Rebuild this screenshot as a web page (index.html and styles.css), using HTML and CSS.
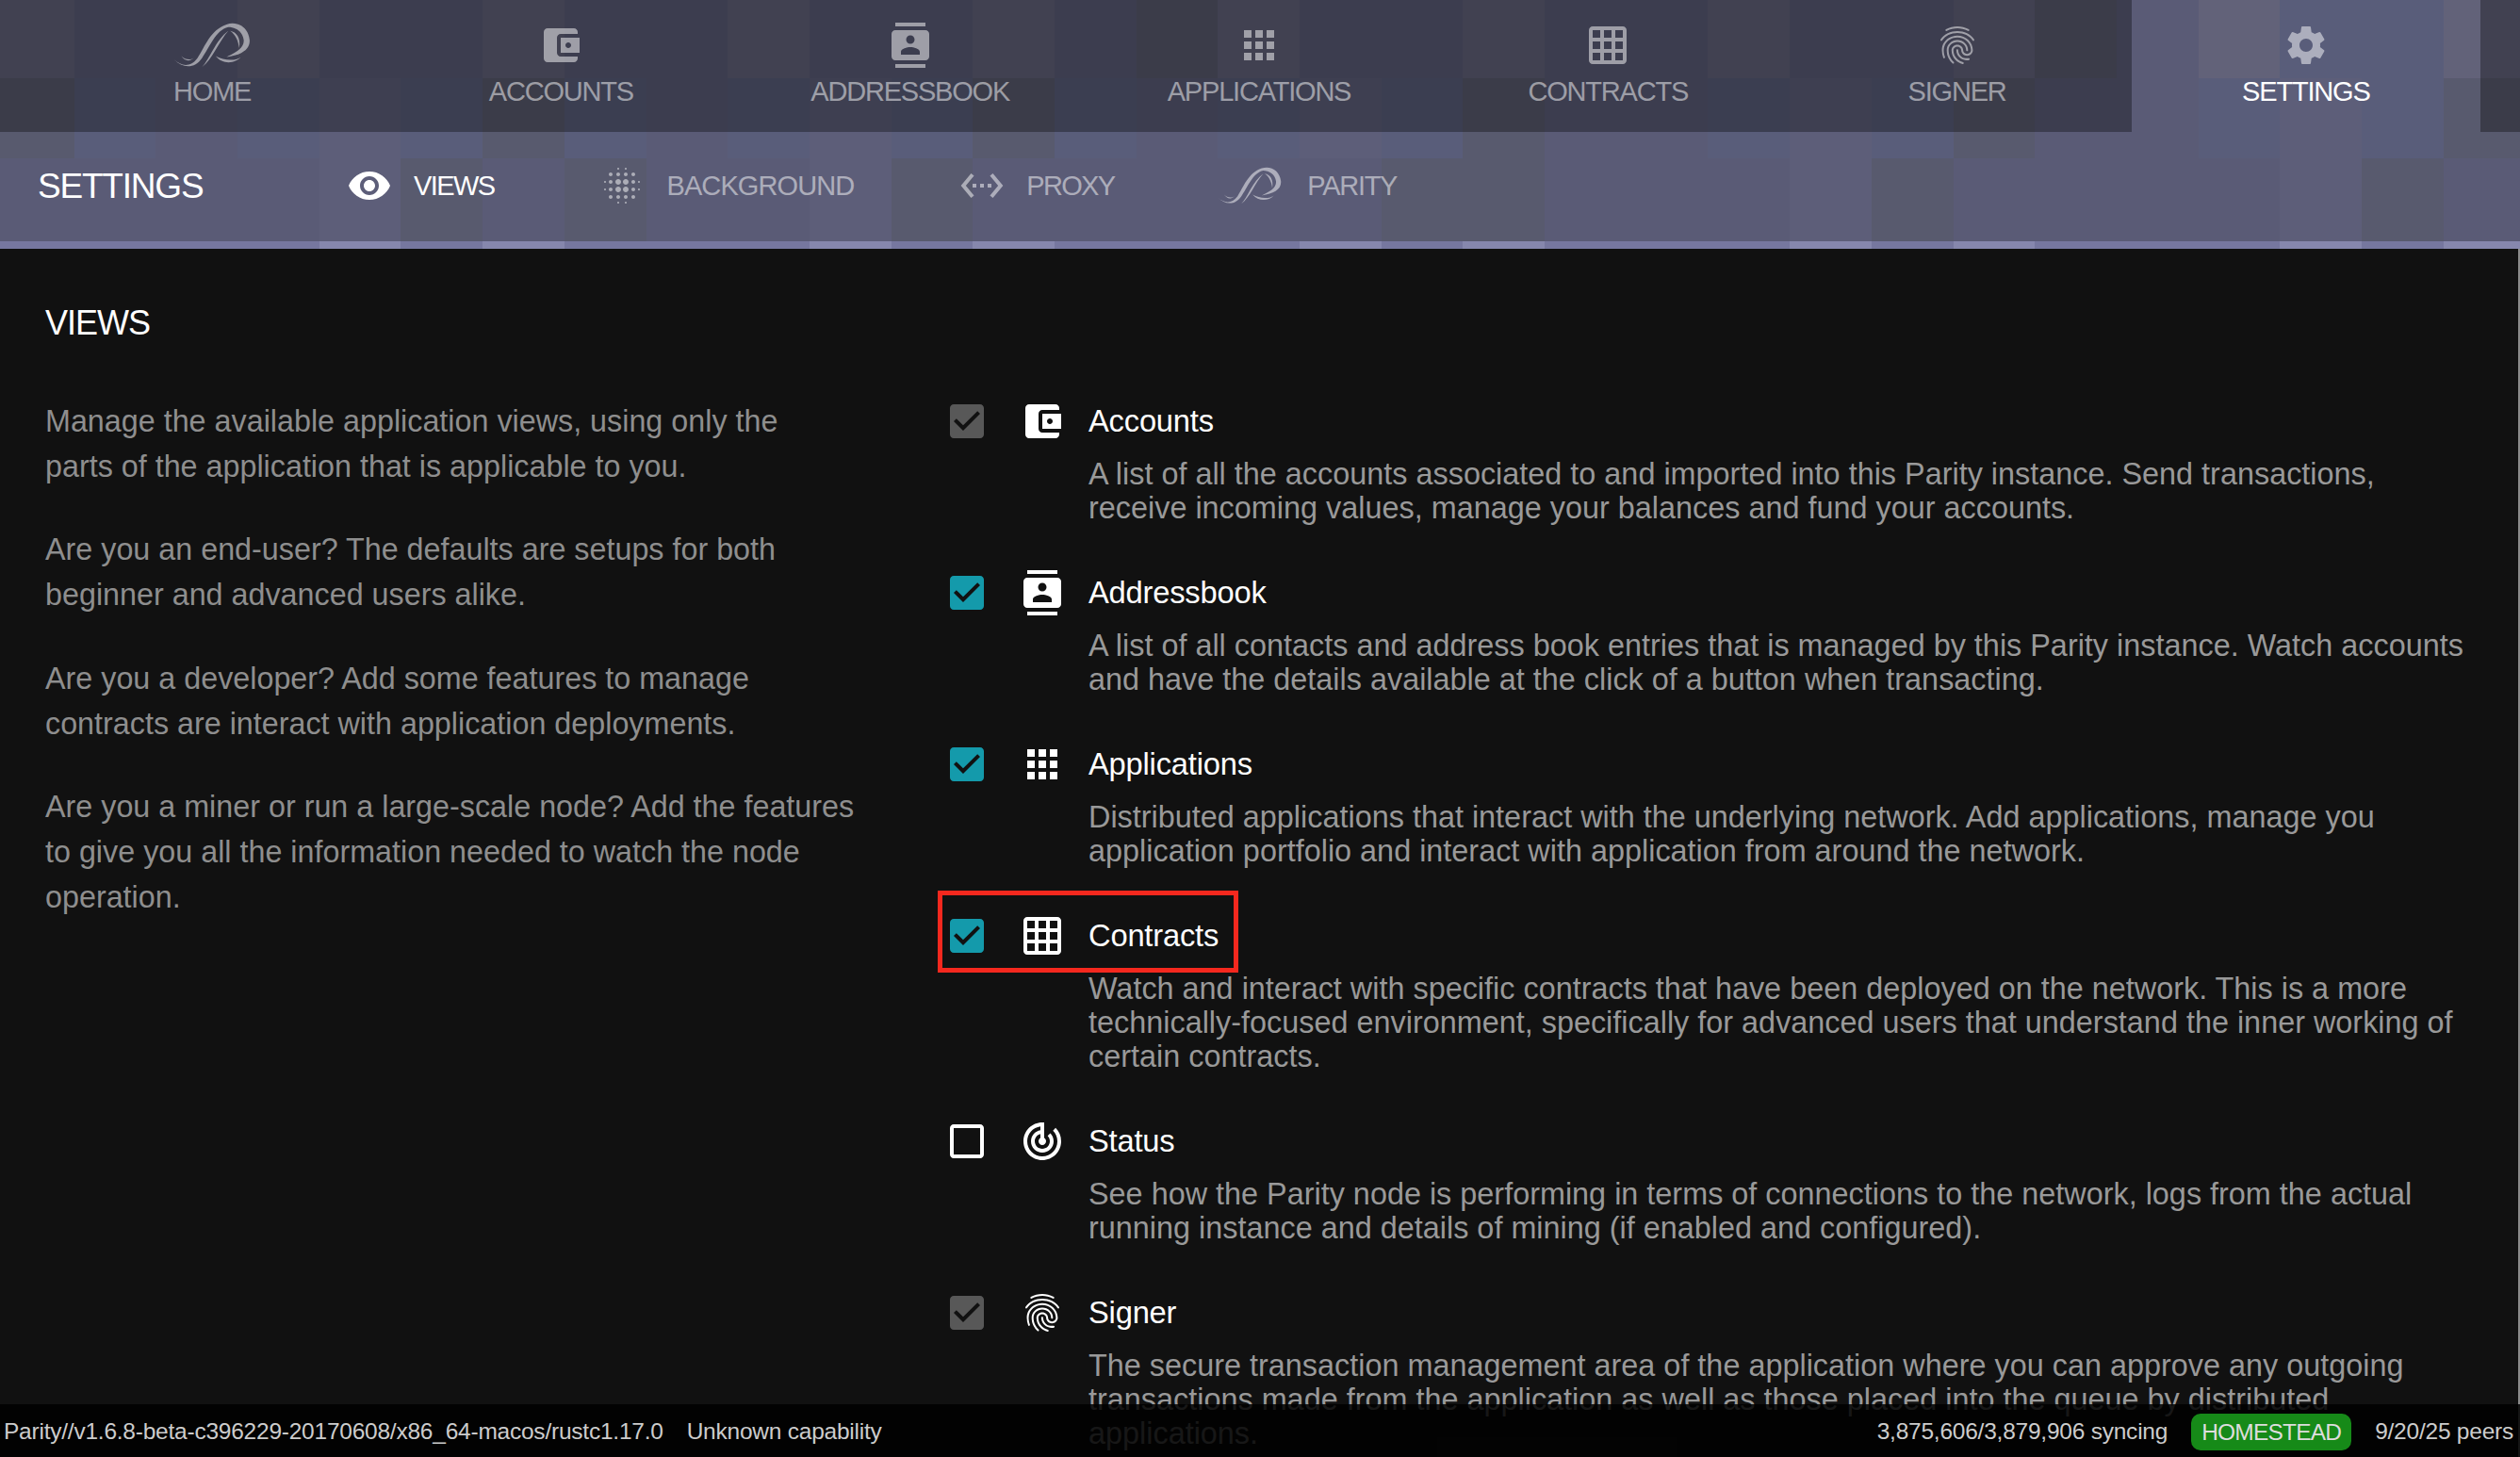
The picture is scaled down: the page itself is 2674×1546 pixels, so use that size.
FILE: index.html
```html
<!DOCTYPE html>
<html lang="en">
<head>
  <meta charset="UTF-8" />
  <title>Parity Settings</title>
  <link rel="stylesheet" href="styles.css">
</head>
<body>
  <header class="chrome">
    <div class="mosaic" id="mosaic"></div>

    <nav class="tabs">
      <div class="tabs-edge tabs-edge-left"></div>
      <a class="tab">
        <svg class="parity-logo" viewBox="0 0 84 50"><path d="M0 41C8 48 18 50 26 39C34 27 40 8 58 2C70 -2 82 5 83.5 19C84.5 30 74 36 58 38C68 33 78 28 77 19C76 10 68 5 60 5C46 8 39 28 31 39C23 51 10 51 0 41Z"/><path d="M31 49C39 41 46 19 60 9C50 20 42 41 31 49Z"/><path d="M62 9C69 10 74 17 72 28C71 20 68 13 62 9Z"/><path d="M46 37C56 43 70 42 74 38C68 45 54 47 46 37Z"/><path d="M8 37C12 41 18 42 22 39C16 44 12 42 8 37Z"/></svg>
        <span>HOME</span>
      </a>
      <a class="tab">
        <svg class="icon" viewBox="0 0 24 24"><path d="M21 18v1c0 1.1-.9 2-2 2H5c-1.11 0-2-.9-2-2V5c0-1.1.89-2 2-2h14c1.1 0 2 .9 2 2v1h-9c-1.11 0-2 .9-2 2v8c0 1.1.89 2 2 2h9zm-9-2h10V8H12v8zm4-2.5c-.83 0-1.5-.67-1.5-1.5s.67-1.5 1.5-1.5 1.5.67 1.5 1.5-.67 1.5-1.5 1.5z"/></svg>
        <span>ACCOUNTS</span>
      </a>
      <a class="tab">
        <svg class="icon" viewBox="0 0 24 24"><path d="M20 0H4v2h16V0zM4 24h16v-2H4v2zM20 4H4c-1.1 0-2 .9-2 2v12c0 1.1.9 2 2 2h16c1.1 0 2-.9 2-2V6c0-1.1-.9-2-2-2zm-8 2.75c1.24 0 2.25 1.01 2.25 2.25s-1.01 2.25-2.25 2.25S9.75 10.24 9.75 9 10.76 6.75 12 6.75zM17 17H7v-1.5c0-1.67 3.33-2.5 5-2.5s5 .83 5 2.5V17z"/></svg>
        <span>ADDRESSBOOK</span>
      </a>
      <a class="tab">
        <svg class="icon" viewBox="0 0 24 24"><path d="M4 8h4V4H4v4zm6 12h4v-4h-4v4zm-6 0h4v-4H4v4zm0-6h4v-4H4v4zm6 0h4v-4h-4v4zm6-10v4h4V4h-4zm-6 4h4V4h-4v4zm6 6h4v-4h-4v4zm0 6h4v-4h-4v4z"/></svg>
        <span>APPLICATIONS</span>
      </a>
      <a class="tab">
        <svg class="icon" viewBox="0 0 24 24"><path d="M20 2H4c-1.1 0-2 .9-2 2v16c0 1.1.9 2 2 2h16c1.1 0 2-.9 2-2V4c0-1.1-.9-2-2-2zM8 20H4v-4h4v4zm0-6H4v-4h4v4zm0-6H4V4h4v4zm6 12h-4v-4h4v4zm0-6h-4v-4h4v4zm0-6h-4V4h4v4zm6 12h-4v-4h4v4zm0-6h-4v-4h4v4zm0-6h-4V4h4v4z"/></svg>
        <span>CONTRACTS</span>
      </a>
      <a class="tab">
        <svg class="icon" viewBox="0 0 24 24"><path d="M17.81 4.47c-.08 0-.16-.02-.23-.06C15.66 3.42 14 3 12.01 3c-1.98 0-3.86.47-5.57 1.41-.24.13-.54.04-.68-.2-.13-.24-.04-.55.2-.68C7.82 2.52 9.86 2 12.01 2c2.13 0 3.99.47 6.03 1.52.25.13.34.43.21.67-.09.18-.26.28-.44.28zM3.5 9.72c-.1 0-.2-.03-.29-.09-.23-.16-.28-.47-.12-.7.99-1.4 2.25-2.5 3.75-3.27C9.98 4.04 14 4.03 17.15 5.65c1.5.77 2.76 1.86 3.75 3.25.16.22.11.54-.12.7-.23.16-.54.11-.7-.12-.9-1.26-2.04-2.25-3.39-2.94-2.87-1.47-6.54-1.47-9.4.01-1.36.7-2.5 1.7-3.4 2.96-.08.14-.23.21-.39.21zm6.25 12.07c-.13 0-.26-.05-.35-.15-.87-.87-1.34-1.43-2.01-2.64-.69-1.23-1.05-2.73-1.05-4.34 0-2.97 2.54-5.39 5.66-5.39s5.66 2.42 5.66 5.39c0 .28-.22.5-.5.5s-.5-.22-.5-.5c0-2.42-2.09-4.39-4.66-4.39-2.57 0-4.66 1.97-4.66 4.39 0 1.44.32 2.77.93 3.85.64 1.15 1.08 1.64 1.85 2.42.19.2.19.51 0 .71-.11.1-.24.15-.37.15zm7.17-1.85c-1.19 0-2.24-.3-3.1-.89-1.49-1.01-2.38-2.65-2.38-4.39 0-.28.22-.5.5-.5s.5.22.5.5c0 1.41.72 2.74 1.94 3.56.71.48 1.54.71 2.54.71.24 0 .64-.03 1.04-.1.27-.05.53.13.58.41.05.27-.13.53-.41.58-.57.11-1.07.12-1.21.12zM14.91 22c-.04 0-.09-.01-.13-.02-1.59-.44-2.63-1.03-3.72-2.1-1.4-1.39-2.17-3.24-2.17-5.22 0-1.62 1.38-2.94 3.08-2.94 1.7 0 3.08 1.32 3.08 2.94 0 1.07.93 1.94 2.08 1.94s2.08-.87 2.08-1.94c0-3.77-3.25-6.83-7.25-6.83-2.84 0-5.44 1.58-6.61 4.03-.39.81-.59 1.76-.59 2.8 0 .78.07 2.01.67 3.61.1.26-.03.55-.29.64-.26.1-.55-.04-.64-.29-.49-1.31-.73-2.61-.73-3.96 0-1.2.23-2.29.68-3.24 1.33-2.79 4.28-4.6 7.51-4.6 4.55 0 8.25 3.51 8.25 7.83 0 1.62-1.38 2.94-3.08 2.94s-3.08-1.32-3.08-2.94c0-1.07-.93-1.94-2.08-1.94s-2.08.87-2.08 1.94c0 1.71.66 3.31 1.87 4.51.95.94 1.86 1.46 3.27 1.85.27.07.42.35.35.61-.05.23-.26.38-.47.38z"/></svg>
        <span>SIGNER</span>
      </a>
      <a class="tab tab-active">
        <svg class="icon" viewBox="0 0 24 24"><path d="M19.43 12.98c.04-.32.07-.64.07-.98s-.03-.66-.07-.98l2.11-1.65c.19-.15.24-.42.12-.64l-2-3.46c-.12-.22-.39-.3-.61-.22l-2.49 1c-.52-.4-1.08-.73-1.69-.98l-.38-2.65C14.46 2.18 14.25 2 14 2h-4c-.25 0-.46.18-.49.42l-.38 2.65c-.61.25-1.17.59-1.69.98l-2.49-1c-.23-.09-.49 0-.61.22l-2 3.46c-.13.22-.07.49.12.64l2.11 1.65c-.04.32-.07.65-.07.98s.03.66.07.98l-2.11 1.65c-.19.15-.24.42-.12.64l2 3.46c.12.22.39.3.61.22l2.49-1c.52.4 1.08.73 1.69.98l.38 2.65c.03.24.24.42.49.42h4c.25 0 .46-.18.49-.42l.38-2.65c.61-.25 1.17-.59 1.69-.98l2.49 1c.23.09.49 0 .61-.22l2-3.46c.12-.22.07-.49-.12-.64l-2.11-1.65zM12 15.5c-1.93 0-3.5-1.57-3.5-3.5s1.57-3.5 3.5-3.5 3.5 1.57 3.5 3.5-1.57 3.5-3.5 3.5z"/></svg>
        <span>SETTINGS</span>
      </a>
      <div class="tabs-edge tabs-edge-right"></div>
    </nav>

    <div class="subbar">
      <div class="subbar-title">SETTINGS</div>
      <a class="subtab subtab-active">
        <svg class="icon" viewBox="0 0 24 24"><path d="M12 4.5C7 4.5 2.73 7.61 1 12c1.73 4.39 6 7.5 11 7.5s9.27-3.11 11-7.5c-1.73-4.39-6-7.5-11-7.5zM12 17c-2.76 0-5-2.24-5-5s2.24-5 5-5 5 2.24 5 5-2.24 5-5 5zm0-8c-1.66 0-3 1.34-3 3s1.34 3 3 3 3-1.34 3-3-1.34-3-3-3z"/></svg>
        <span>VIEWS</span>
      </a>
      <a class="subtab">
        <svg class="icon" viewBox="0 0 24 24"><path d="M6 13c-.55 0-1 .45-1 1s.45 1 1 1 1-.45 1-1-.45-1-1-1zm0 4c-.55 0-1 .45-1 1s.45 1 1 1 1-.45 1-1-.45-1-1-1zm0-8c-.55 0-1 .45-1 1s.45 1 1 1 1-.45 1-1-.45-1-1-1zm-3 .5c-.28 0-.5.22-.5.5s.22.5.5.5.5-.22.5-.5-.22-.5-.5-.5zM6 5c-.55 0-1 .45-1 1s.45 1 1 1 1-.45 1-1-.45-1-1-1zm15 5.5c.28 0 .5-.22.5-.5s-.22-.5-.5-.5-.5.22-.5.5.22.5.5.5zM14 7c.55 0 1-.45 1-1s-.45-1-1-1-1 .45-1 1 .45 1 1 1zm0-3.5c.28 0 .5-.22.5-.5s-.22-.5-.5-.5-.5.22-.5.5.22.5.5.5zm-11 10c-.28 0-.5.22-.5.5s.22.5.5.5.5-.22.5-.5-.22-.5-.5-.5zm7 7c-.28 0-.5.22-.5.5s.22.5.5.5.5-.22.5-.5-.22-.5-.5-.5zm0-17c.28 0 .5-.22.5-.5s-.22-.5-.5-.5-.5.22-.5.5.22.5.5.5zM10 7c.55 0 1-.45 1-1s-.45-1-1-1-1 .45-1 1 .45 1 1 1zm0 5.5c-.83 0-1.5.67-1.5 1.5s.67 1.5 1.5 1.5 1.5-.67 1.5-1.5-.67-1.5-1.5-1.5zm8 .5c-.55 0-1 .45-1 1s.45 1 1 1 1-.45 1-1-.45-1-1-1zm0 4c-.55 0-1 .45-1 1s.45 1 1 1 1-.45 1-1-.45-1-1-1zm0-8c-.55 0-1 .45-1 1s.45 1 1 1 1-.45 1-1-.45-1-1-1zm0-4c-.55 0-1 .45-1 1s.45 1 1 1 1-.45 1-1-.45-1-1-1zm3 8.5c-.28 0-.5.22-.5.5s.22.5.5.5.5-.22.5-.5-.22-.5-.5-.5zM14 17c-.55 0-1 .45-1 1s.45 1 1 1 1-.45 1-1-.45-1-1-1zm0 3.5c-.28 0-.5.22-.5.5s.22.5.5.5.5-.22.5-.5-.22-.5-.5-.5zm-4-12c-.83 0-1.5.67-1.5 1.5s.67 1.5 1.5 1.5 1.5-.67 1.5-1.5-.67-1.5-1.5-1.5zm0 8.5c-.55 0-1 .45-1 1s.45 1 1 1 1-.45 1-1-.45-1-1-1zm4-4.5c-.83 0-1.5.67-1.5 1.5s.67 1.5 1.5 1.5 1.5-.67 1.5-1.5-.67-1.5-1.5-1.5zm0-4c-.83 0-1.5.67-1.5 1.5s.67 1.5 1.5 1.5 1.5-.67 1.5-1.5-.67-1.5-1.5-1.5z"/></svg>
        <span>BACKGROUND</span>
      </a>
      <a class="subtab subtab-proxy">
        <svg class="icon" viewBox="0 0 24 24"><path d="M7.77 6.76L6.23 5.48.82 12l5.41 6.52 1.54-1.28L3.42 12l4.35-5.24zM7 13h2v-2H7v2zm10-2h-2v2h2v-2zm-6 2h2v-2h-2v2zm6.77-7.52l-1.54 1.28L20.58 12l-4.35 5.24 1.54 1.28L23.18 12l-5.41-6.52z"/></svg>
        <span>PROXY</span>
      </a>
      <a class="subtab subtab-parity">
        <svg class="parity-logo parity-logo-small" viewBox="0 0 84 50"><path d="M0 41C8 48 18 50 26 39C34 27 40 8 58 2C70 -2 82 5 83.5 19C84.5 30 74 36 58 38C68 33 78 28 77 19C76 10 68 5 60 5C46 8 39 28 31 39C23 51 10 51 0 41Z"/><path d="M31 49C39 41 46 19 60 9C50 20 42 41 31 49Z"/><path d="M62 9C69 10 74 17 72 28C71 20 68 13 62 9Z"/><path d="M46 37C56 43 70 42 74 38C68 45 54 47 46 37Z"/><path d="M8 37C12 41 18 42 22 39C16 44 12 42 8 37Z"/></svg>
        <span>PARITY</span>
      </a>
    </div>
  </header>

  <main class="panel">
    <h2 class="panel-title">VIEWS</h2>
    <div class="columns">
      <section class="intro">
        <p>Manage the available application views, using only the<br>parts of the application that is applicable to you.</p>
        <p>Are you an end-user? The defaults are setups for both beginner and advanced users alike.</p>
        <p>Are you a developer? Add some features to manage contracts are interact with application deployments.</p>
        <p>Are you a miner or run a large-scale node? Add the features to give you all the information needed to watch the node operation.</p>
      </section>

      <section class="views">
        <div class="view">
          <div class="view-head">
            <svg class="check check-disabled" viewBox="0 0 24 24"><path d="M19 3H5c-1.11 0-2 .9-2 2v14c0 1.1.89 2 2 2h14c1.11 0 2-.89 2-2V5c0-1.11-.89-2-2-2zm-9 14l-5-5 1.41-1.41L10 14.17l7.59-7.59L19 8l-9 9z"/></svg>
            <svg class="icon" viewBox="0 0 24 24"><path d="M21 18v1c0 1.1-.9 2-2 2H5c-1.11 0-2-.9-2-2V5c0-1.1.89-2 2-2h14c1.1 0 2 .9 2 2v1h-9c-1.11 0-2 .9-2 2v8c0 1.1.89 2 2 2h9zm-9-2h10V8H12v8zm4-2.5c-.83 0-1.5-.67-1.5-1.5s.67-1.5 1.5-1.5 1.5.67 1.5 1.5-.67 1.5-1.5 1.5z"/></svg>
            <span class="view-name">Accounts</span>
          </div>
          <p class="view-desc">A list of all the accounts associated to and imported into this Parity instance. Send transactions, receive incoming values, manage your balances and fund your accounts.</p>
        </div>

        <div class="view">
          <div class="view-head">
            <svg class="check check-on" viewBox="0 0 24 24"><path d="M19 3H5c-1.11 0-2 .9-2 2v14c0 1.1.89 2 2 2h14c1.11 0 2-.89 2-2V5c0-1.11-.89-2-2-2zm-9 14l-5-5 1.41-1.41L10 14.17l7.59-7.59L19 8l-9 9z"/></svg>
            <svg class="icon" viewBox="0 0 24 24"><path d="M20 0H4v2h16V0zM4 24h16v-2H4v2zM20 4H4c-1.1 0-2 .9-2 2v12c0 1.1.9 2 2 2h16c1.1 0 2-.9 2-2V6c0-1.1-.9-2-2-2zm-8 2.75c1.24 0 2.25 1.01 2.25 2.25s-1.01 2.25-2.25 2.25S9.75 10.24 9.75 9 10.76 6.75 12 6.75zM17 17H7v-1.5c0-1.67 3.33-2.5 5-2.5s5 .83 5 2.5V17z"/></svg>
            <span class="view-name">Addressbook</span>
          </div>
          <p class="view-desc">A list of all contacts and address book entries that is managed by this Parity instance. Watch accounts and have the details available at the click of a button when transacting.</p>
        </div>

        <div class="view">
          <div class="view-head">
            <svg class="check check-on" viewBox="0 0 24 24"><path d="M19 3H5c-1.11 0-2 .9-2 2v14c0 1.1.89 2 2 2h14c1.11 0 2-.89 2-2V5c0-1.11-.89-2-2-2zm-9 14l-5-5 1.41-1.41L10 14.17l7.59-7.59L19 8l-9 9z"/></svg>
            <svg class="icon" viewBox="0 0 24 24"><path d="M4 8h4V4H4v4zm6 12h4v-4h-4v4zm-6 0h4v-4H4v4zm0-6h4v-4H4v4zm6 0h4v-4h-4v4zm6-10v4h4V4h-4zm-6 4h4V4h-4v4zm6 6h4v-4h-4v4zm0 6h4v-4h-4v4z"/></svg>
            <span class="view-name">Applications</span>
          </div>
          <p class="view-desc">Distributed applications that interact with the underlying network. Add applications, manage you application portfolio and interact with application from around the network.</p>
        </div>

        <div class="view">
          <div class="view-head">
            <div class="callout"></div>
            <svg class="check check-on" viewBox="0 0 24 24"><path d="M19 3H5c-1.11 0-2 .9-2 2v14c0 1.1.89 2 2 2h14c1.11 0 2-.89 2-2V5c0-1.11-.89-2-2-2zm-9 14l-5-5 1.41-1.41L10 14.17l7.59-7.59L19 8l-9 9z"/></svg>
            <svg class="icon" viewBox="0 0 24 24"><path d="M20 2H4c-1.1 0-2 .9-2 2v16c0 1.1.9 2 2 2h16c1.1 0 2-.9 2-2V4c0-1.1-.9-2-2-2zM8 20H4v-4h4v4zm0-6H4v-4h4v4zm0-6H4V4h4v4zm6 12h-4v-4h4v4zm0-6h-4v-4h4v4zm0-6h-4V4h4v4zm6 12h-4v-4h4v4zm0-6h-4v-4h4v4zm0-6h-4V4h4v4z"/></svg>
            <span class="view-name">Contracts</span>
          </div>
          <p class="view-desc">Watch and interact with specific contracts that have been deployed on the network. This is a more technically-focused environment, specifically for advanced users that understand the inner working of certain contracts.</p>
        </div>

        <div class="view">
          <div class="view-head">
            <svg class="check check-off" viewBox="0 0 24 24"><path d="M19 5v14H5V5h14m0-2H5c-1.1 0-2 .9-2 2v14c0 1.1.9 2 2 2h14c1.1 0 2-.9 2-2V5c0-1.1-.9-2-2-2z"/></svg>
            <svg class="icon" viewBox="0 0 24 24"><path d="M19.07 4.93l-1.41 1.41C19.1 7.79 20 9.79 20 12c0 4.42-3.58 8-8 8s-8-3.58-8-8c0-4.08 3.05-7.44 7-7.93v2.02C8.16 6.57 6 9.03 6 12c0 3.31 2.69 6 6 6s6-2.69 6-6c0-1.66-.67-3.16-1.76-4.24l-1.41 1.41C15.55 9.9 16 10.9 16 12c0 2.21-1.79 4-4 4s-4-1.79-4-4c0-1.86 1.28-3.41 3-3.86v2.14c-.6.35-1 .98-1 1.72 0 1.1.9 2 2 2s2-.9 2-2c0-.74-.4-1.38-1-1.72V2h-1C6.48 2 2 6.48 2 12s4.48 10 10 10 10-4.48 10-10c0-2.76-1.12-5.26-2.93-7.07z"/></svg>
            <span class="view-name">Status</span>
          </div>
          <p class="view-desc">See how the Parity node is performing in terms of connections to the network, logs from the actual running instance and details of mining (if enabled and configured).</p>
        </div>

        <div class="view">
          <div class="view-head">
            <svg class="check check-disabled" viewBox="0 0 24 24"><path d="M19 3H5c-1.11 0-2 .9-2 2v14c0 1.1.89 2 2 2h14c1.11 0 2-.89 2-2V5c0-1.11-.89-2-2-2zm-9 14l-5-5 1.41-1.41L10 14.17l7.59-7.59L19 8l-9 9z"/></svg>
            <svg class="icon" viewBox="0 0 24 24"><path d="M17.81 4.47c-.08 0-.16-.02-.23-.06C15.66 3.42 14 3 12.01 3c-1.98 0-3.86.47-5.57 1.41-.24.13-.54.04-.68-.2-.13-.24-.04-.55.2-.68C7.82 2.52 9.86 2 12.01 2c2.13 0 3.99.47 6.03 1.52.25.13.34.43.21.67-.09.18-.26.28-.44.28zM3.5 9.72c-.1 0-.2-.03-.29-.09-.23-.16-.28-.47-.12-.7.99-1.4 2.25-2.5 3.75-3.27C9.98 4.04 14 4.03 17.15 5.65c1.5.77 2.76 1.86 3.75 3.25.16.22.11.54-.12.7-.23.16-.54.11-.7-.12-.9-1.26-2.04-2.25-3.39-2.94-2.87-1.47-6.54-1.47-9.4.01-1.36.7-2.5 1.7-3.4 2.96-.08.14-.23.21-.39.21zm6.25 12.07c-.13 0-.26-.05-.35-.15-.87-.87-1.34-1.43-2.01-2.64-.69-1.23-1.05-2.73-1.05-4.34 0-2.97 2.54-5.39 5.66-5.39s5.66 2.42 5.66 5.39c0 .28-.22.5-.5.5s-.5-.22-.5-.5c0-2.42-2.09-4.39-4.66-4.39-2.57 0-4.66 1.97-4.66 4.39 0 1.44.32 2.77.93 3.85.64 1.15 1.08 1.64 1.85 2.42.19.2.19.51 0 .71-.11.1-.24.15-.37.15zm7.17-1.85c-1.19 0-2.24-.3-3.1-.89-1.49-1.01-2.38-2.65-2.38-4.39 0-.28.22-.5.5-.5s.5.22.5.5c0 1.41.72 2.74 1.94 3.56.71.48 1.54.71 2.54.71.24 0 .64-.03 1.04-.1.27-.05.53.13.58.41.05.27-.13.53-.41.58-.57.11-1.07.12-1.21.12zM14.91 22c-.04 0-.09-.01-.13-.02-1.59-.44-2.63-1.03-3.72-2.1-1.4-1.39-2.17-3.24-2.17-5.22 0-1.62 1.38-2.94 3.08-2.94 1.7 0 3.08 1.32 3.08 2.94 0 1.07.93 1.94 2.08 1.94s2.08-.87 2.08-1.94c0-3.77-3.25-6.83-7.25-6.83-2.84 0-5.44 1.58-6.61 4.03-.39.81-.59 1.76-.59 2.8 0 .78.07 2.01.67 3.61.1.26-.03.55-.29.64-.26.1-.55-.04-.64-.29-.49-1.31-.73-2.61-.73-3.96 0-1.2.23-2.29.68-3.24 1.33-2.79 4.28-4.6 7.51-4.6 4.55 0 8.25 3.51 8.25 7.83 0 1.62-1.38 2.94-3.08 2.94s-3.08-1.32-3.08-2.94c0-1.07-.93-1.94-2.08-1.94s-2.08.87-2.08 1.94c0 1.71.66 3.31 1.87 4.51.95.94 1.86 1.46 3.27 1.85.27.07.42.35.35.61-.05.23-.26.38-.47.38z"/></svg>
            <span class="view-name">Signer</span>
          </div>
          <p class="view-desc">The secure transaction management area of the application where you can approve any outgoing transactions made from the application as well as those placed into the queue by distributed applications.</p>
        </div>
      </section>
    </div>
  </main>

  <footer class="status">
    <div class="status-left">
      <span>Parity//v1.6.8-beta-c396229-20170608/x86_64-macos/rustc1.17.0</span>
      <span>Unknown capability</span>
    </div>
    <div class="status-right">
      <span>3,875,606/3,879,906 syncing</span>
      <span class="chain">HOMESTEAD</span>
      <span>9/20/25 peers</span>
    </div>
  </footer>

  <script src="script.js"></script>
</body>
</html>
```

FILE: styles.css
```css
* {
  box-sizing: border-box;
}
html, body {
  height: 100%;
}
body {
  margin: 0;
  height: 1546px;
  overflow: hidden;
  position: relative;
  font-family: "Liberation Sans", Arial, sans-serif;
  background-color: #8a8a8a;
  display: flex;
  flex-direction: column;
}

/* top chrome, sits on the pixel mosaic */
.chrome {
  position: relative;
  height: 264px;
  flex: none;
  overflow: hidden;
}
.mosaic {
  position: absolute;
  top: 0;
  left: -8px;
  display: grid;
  grid-template-columns: repeat(31, 86.7px);
  grid-template-rows: 83px 85px 88px 8px;
}
.tabs {
  position: relative;
  display: flex;
  height: 140px;
}
.tabs-edge {
  background: rgba(0, 0, 0, 0.33);
}
.tabs-edge-left {
  width: 40px;
}
.tabs-edge-right {
  width: 42px;
}
.tab {
  flex: 1;
  display: flex;
  flex-direction: column;
  align-items: center;
  padding-top: 24px;
  background: rgba(0, 0, 0, 0.33);
  color: rgba(255, 255, 255, 0.5);
  font-size: 29px;
  letter-spacing: -1.2px;
  line-height: 36px;
}
.tab .icon, .tab .parity-logo {
  width: 48px;
  height: 48px;
  margin-bottom: 7px;
}
.tab .parity-logo {
  width: 84px;
}
.tab-active {
  background: transparent;
}
.tab-active span {
  color: #fff;
}
.icon, .parity-logo {
  fill: currentColor;
  display: block;
  flex: none;
}
.subbar {
  position: relative;
  height: 116px;
  display: flex;
  align-items: center;
  padding-left: 40px;
}
.subbar-title {
  width: 328px;
  color: #fff;
  font-size: 37px;
  letter-spacing: -1.2px;
}
.subtab {
  display: flex;
  align-items: center;
  gap: 23px;
  margin-right: 112px;
  margin-bottom: 2px;
  color: rgba(255, 255, 255, 0.5);
  font-size: 29px;
  letter-spacing: -0.9px;
}
.subtab .icon {
  width: 48px;
  height: 48px;
}
.subtab .parity-logo-small {
  width: 68px;
  height: 40px;
}
.subtab-active {
  color: #fff;
  letter-spacing: -1.6px;
}
.subtab-proxy {
  margin-right: 110px;
  letter-spacing: -1.7px;
}
.subtab-parity {
  gap: 27px;
  letter-spacing: -1.3px;
}

/* main panel */
.panel {
  flex: 1;
  margin-right: 2px;
  padding: 57px 32px 0 48px;
  background-color: #111;
  overflow: hidden;
}
.panel-title {
  margin: 0 0 58px;
  color: #fff;
  font-size: 36px;
  font-weight: normal;
  letter-spacing: -1px;
  line-height: 44px;
}
.columns {
  display: flex;
  gap: 84px;
}
.intro {
  width: 870px;
  flex: none;
  color: #8e8e8e;
  font-size: 32.3px;
  line-height: 48px;
}
.intro p {
  margin: 0 0 40.4px;
}
.views {
  flex: 1;
}
.view {
  margin-bottom: 48px;
}
.view-head {
  position: relative;
  display: flex;
  align-items: center;
  height: 48px;
}
.check {
  width: 48px;
  height: 48px;
  flex: none;
  margin-right: 32px;
}
.check-disabled {
  fill: #585858;
}
.check-on {
  fill: #149aab;
}
.check-off {
  fill: #fff;
}
.view-head .icon {
  width: 48px;
  height: 48px;
  fill: #fff;
  margin-right: 25px;
}
.view-name {
  color: #fff;
  font-size: 32.7px;
  letter-spacing: -0.2px;
}
.view-desc {
  margin: 14px 0 0;
  padding-left: 153px;
  width: 1620px;
  color: #999;
  font-size: 32.4px;
  line-height: 36px;
}
/* red marker round the Contracts row */
.callout {
  position: absolute;
  top: -24px;
  left: -7px;
  width: 319px;
  height: 87px;
  border: 5px solid #f5281e;
}

.status {
  position: absolute;
  left: 0;
  right: 0;
  bottom: 0;
  height: 56px;
  display: flex;
  justify-content: space-between;
  align-items: center;
  padding: 2px 7px 0 4px;
  background: rgba(0, 0, 0, 0.85);
  color: #ccc;
  font-size: 24.5px;
  letter-spacing: -0.23px;
}
.status-left, .status-right {
  display: flex;
  align-items: center;
  gap: 25px;
}
.chain {
  padding: 4px 11px;
  height: 39px;
  line-height: 31px;
  margin-top: 1px;
  border-radius: 10px;
  background-color: #168a18;
  color: #ddd;
  letter-spacing: -0.8px;
}
```

FILE: script.js
```js
// mosaic behind the top chrome, one letter per block
const shades = {
  g: '#585a6e',
  n: '#5a5b76',
  b: '#595d7a',
  l: '#5d5e79',
  L: '#626279',
  s: '#76779f',
  S: '#8687ad'
};

const rows = [
  'LnnLnnLnnLnnLngLnnLnnLnnLgnLbbL',
  'gbnblbgbnblbgbnblbgnnblbgnnblbg',
  'nnnnlgngnnlgnnnnnggnnnlgnnnnlgn',
  'ssssSsSsssSsSsssSsSsssSsSsssSsS'
];

const mosaic = document.getElementById('mosaic');
rows.forEach(row => {
  row.split('').forEach(letter => {
    const cell = document.createElement('div');
    cell.style.background = shades[letter];
    mosaic.appendChild(cell);
  });
});
```
